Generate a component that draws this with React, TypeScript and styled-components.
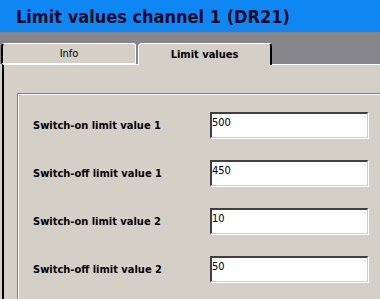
import styled, { createGlobalStyle } from 'styled-components';

const GlobalStyle = createGlobalStyle`
  html, body {
    margin: 0;
    padding: 0;
    background: #d4d0c8;
    overflow: hidden;
  }
`;

const limits = [
  { label: 'Switch-on limit value 1', value: '500' },
  { label: 'Switch-off limit value 1', value: '450' },
  { label: 'Switch-on limit value 2', value: '10' },
  { label: 'Switch-off limit value 2', value: '50' },
];

function App() {
  return (
    <Screen>
      <GlobalStyle />
      <Header>
        <Title>Limit values channel 1 (DR21)</Title>
      </Header>
      <TabStrip>
        <Tab>Info</Tab>
        <Tab $active>Limit values</Tab>
      </TabStrip>
      <Panel>
        <GroupBox>
          {limits.map((item) => (
            <Row key={item.label}>
              <Label>{item.label}</Label>
              <ValueInput defaultValue={item.value} />
            </Row>
          ))}
        </GroupBox>
      </Panel>
    </Screen>
  );
}

const Screen = styled.div`
  width: 380px;
  height: 299px;
  display: flex;
  flex-direction: column;
  overflow: hidden;
  font-family: 'DejaVu Sans Condensed', 'DejaVu Sans', sans-serif;
`;

const Header = styled.header`
  flex-shrink: 0;
  height: 32px;
  background: #0f87f2;
  display: flex;
  align-items: center;
  padding-left: 16px;
  border-bottom: 1px solid #8e7e7e;
`;

const Title = styled.h1`
  margin: 0;
  font-size: 18px;
  font-weight: bold;
  color: #0a0a28;
`;

const TabStrip = styled.div`
  flex-shrink: 0;
  height: 31px;
  background: #86868a;
  display: flex;
  align-items: flex-end;
  padding-left: 1px;
`;

const Tab = styled.div<{ $active?: boolean }>`
  box-sizing: border-box;
  width: ${(p) => (p.$active ? '134px' : '135px')};
  height: ${(p) => (p.$active ? '22px' : '21px')};
  margin-left: ${(p) => (p.$active ? '2px' : '0')};
  margin-bottom: ${(p) => (p.$active ? '-1px' : '0')};
  background: #d4d0c8;
  border-top: 1px solid #ffffff;
  border-left: ${(p) => (p.$active ? '1px solid #ffffff' : '2px solid #000000')};
  border-right: ${(p) => (p.$active ? '2px solid #000000' : '1px solid #ffffff')};
  border-bottom: ${(p) => (p.$active ? 'none' : '1px solid #ffffff')};
  border-top-left-radius: 4px;
  border-top-right-radius: 3px;
  display: flex;
  align-items: center;
  justify-content: center;
  font-size: 11px;
  font-weight: ${(p) => (p.$active ? 'bold' : 'normal')};
  color: #000000;
  position: relative;
  z-index: ${(p) => (p.$active ? 1 : 0)};
`;

const Panel = styled.div`
  flex: 1;
  min-height: 0;
  margin-left: 2px;
  border-left: 2px solid #000000;
  border-top: 1px solid #ffffff;
  padding: 28px 0 0 13px;
  background: #d4d0c8;
`;

const GroupBox = styled.div`
  border-top: 1px solid #808080;
  border-left: 1px solid #808080;
  box-shadow: inset 1px 1px 0 #ffffff;
  padding: 7px 0 0 15px;
  height: 300px;
  display: flex;
  flex-direction: column;
`;

const Row = styled.div`
  flex-shrink: 0;
  height: 48px;
  display: grid;
  grid-template-columns: 177px 158px;
  align-items: center;
`;

const Label = styled.span`
  font-size: 11px;
  font-weight: bold;
  color: #000000;
`;

const ValueInput = styled.input`
  box-sizing: border-box;
  width: 158px;
  height: 26px;
  margin: 0;
  padding: 0 0 6px 0;
  border-style: solid;
  border-width: 2px 1px 1px 2px;
  border-color: #404040 #d4d0c8 #d4d0c8 #404040;
  box-shadow: 1px 1px 0 #ffffff;
  background: #ffffff;
  font-family: 'DejaVu Sans Condensed', 'DejaVu Sans', sans-serif;
  font-size: 11px;
  color: #000000;
  outline: none;
`;

export default App;
